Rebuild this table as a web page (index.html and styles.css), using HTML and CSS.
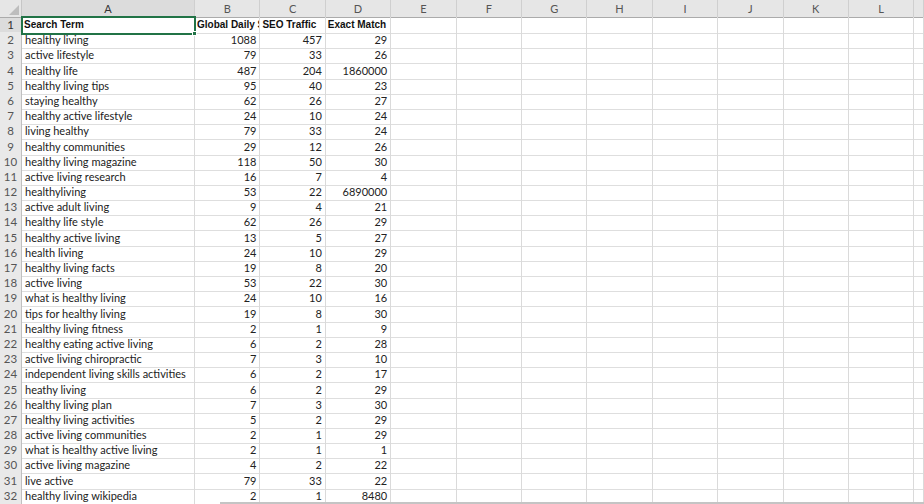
FILE: index.html
```html
<!DOCTYPE html>
<html>
<head>
<meta charset="utf-8">
<link rel="stylesheet" href="styles.css">
</head>
<body>
<div class="sheet">
  <div class="row hdr">
    <div class="corner"><span class="tri"></span></div>
    <div class="ch sel">A</div><div class="ch">B</div><div class="ch">C</div><div class="ch">D</div><div class="ch">E</div><div class="ch">F</div><div class="ch">G</div><div class="ch">H</div><div class="ch">I</div><div class="ch">J</div><div class="ch">K</div><div class="ch">L</div><div class="ch"></div>
  </div>
  <div class="row"><div class="rh sel">1</div><div class="c t b active">Search Term<span class="handle"></span></div><div class="c t b">Global Daily Search Volume</div><div class="c t b">SEO Traffic</div><div class="c t b">Exact Match</div><div class="c"></div><div class="c"></div><div class="c"></div><div class="c"></div><div class="c"></div><div class="c"></div><div class="c"></div><div class="c"></div><div class="c"></div></div>
  <div class="row"><div class="rh">2</div><div class="c t">healthy living</div><div class="c n">1088</div><div class="c n">457</div><div class="c n">29</div><div class="c"></div><div class="c"></div><div class="c"></div><div class="c"></div><div class="c"></div><div class="c"></div><div class="c"></div><div class="c"></div><div class="c"></div></div>
  <div class="row"><div class="rh">3</div><div class="c t">active lifestyle</div><div class="c n">79</div><div class="c n">33</div><div class="c n">26</div><div class="c"></div><div class="c"></div><div class="c"></div><div class="c"></div><div class="c"></div><div class="c"></div><div class="c"></div><div class="c"></div><div class="c"></div></div>
  <div class="row"><div class="rh">4</div><div class="c t">healthy life</div><div class="c n">487</div><div class="c n">204</div><div class="c n">1860000</div><div class="c"></div><div class="c"></div><div class="c"></div><div class="c"></div><div class="c"></div><div class="c"></div><div class="c"></div><div class="c"></div><div class="c"></div></div>
  <div class="row"><div class="rh">5</div><div class="c t">healthy living tips</div><div class="c n">95</div><div class="c n">40</div><div class="c n">23</div><div class="c"></div><div class="c"></div><div class="c"></div><div class="c"></div><div class="c"></div><div class="c"></div><div class="c"></div><div class="c"></div><div class="c"></div></div>
  <div class="row"><div class="rh">6</div><div class="c t">staying healthy</div><div class="c n">62</div><div class="c n">26</div><div class="c n">27</div><div class="c"></div><div class="c"></div><div class="c"></div><div class="c"></div><div class="c"></div><div class="c"></div><div class="c"></div><div class="c"></div><div class="c"></div></div>
  <div class="row"><div class="rh">7</div><div class="c t">healthy active lifestyle</div><div class="c n">24</div><div class="c n">10</div><div class="c n">24</div><div class="c"></div><div class="c"></div><div class="c"></div><div class="c"></div><div class="c"></div><div class="c"></div><div class="c"></div><div class="c"></div><div class="c"></div></div>
  <div class="row"><div class="rh">8</div><div class="c t">living healthy</div><div class="c n">79</div><div class="c n">33</div><div class="c n">24</div><div class="c"></div><div class="c"></div><div class="c"></div><div class="c"></div><div class="c"></div><div class="c"></div><div class="c"></div><div class="c"></div><div class="c"></div></div>
  <div class="row"><div class="rh">9</div><div class="c t">healthy communities</div><div class="c n">29</div><div class="c n">12</div><div class="c n">26</div><div class="c"></div><div class="c"></div><div class="c"></div><div class="c"></div><div class="c"></div><div class="c"></div><div class="c"></div><div class="c"></div><div class="c"></div></div>
  <div class="row"><div class="rh">10</div><div class="c t">healthy living magazine</div><div class="c n">118</div><div class="c n">50</div><div class="c n">30</div><div class="c"></div><div class="c"></div><div class="c"></div><div class="c"></div><div class="c"></div><div class="c"></div><div class="c"></div><div class="c"></div><div class="c"></div></div>
  <div class="row"><div class="rh">11</div><div class="c t">active living research</div><div class="c n">16</div><div class="c n">7</div><div class="c n">4</div><div class="c"></div><div class="c"></div><div class="c"></div><div class="c"></div><div class="c"></div><div class="c"></div><div class="c"></div><div class="c"></div><div class="c"></div></div>
  <div class="row"><div class="rh">12</div><div class="c t">healthyliving</div><div class="c n">53</div><div class="c n">22</div><div class="c n">6890000</div><div class="c"></div><div class="c"></div><div class="c"></div><div class="c"></div><div class="c"></div><div class="c"></div><div class="c"></div><div class="c"></div><div class="c"></div></div>
  <div class="row"><div class="rh">13</div><div class="c t">active adult living</div><div class="c n">9</div><div class="c n">4</div><div class="c n">21</div><div class="c"></div><div class="c"></div><div class="c"></div><div class="c"></div><div class="c"></div><div class="c"></div><div class="c"></div><div class="c"></div><div class="c"></div></div>
  <div class="row"><div class="rh">14</div><div class="c t">healthy life style</div><div class="c n">62</div><div class="c n">26</div><div class="c n">29</div><div class="c"></div><div class="c"></div><div class="c"></div><div class="c"></div><div class="c"></div><div class="c"></div><div class="c"></div><div class="c"></div><div class="c"></div></div>
  <div class="row"><div class="rh">15</div><div class="c t">healthy active living</div><div class="c n">13</div><div class="c n">5</div><div class="c n">27</div><div class="c"></div><div class="c"></div><div class="c"></div><div class="c"></div><div class="c"></div><div class="c"></div><div class="c"></div><div class="c"></div><div class="c"></div></div>
  <div class="row"><div class="rh">16</div><div class="c t">health living</div><div class="c n">24</div><div class="c n">10</div><div class="c n">29</div><div class="c"></div><div class="c"></div><div class="c"></div><div class="c"></div><div class="c"></div><div class="c"></div><div class="c"></div><div class="c"></div><div class="c"></div></div>
  <div class="row"><div class="rh">17</div><div class="c t">healthy living facts</div><div class="c n">19</div><div class="c n">8</div><div class="c n">20</div><div class="c"></div><div class="c"></div><div class="c"></div><div class="c"></div><div class="c"></div><div class="c"></div><div class="c"></div><div class="c"></div><div class="c"></div></div>
  <div class="row"><div class="rh">18</div><div class="c t">active living</div><div class="c n">53</div><div class="c n">22</div><div class="c n">30</div><div class="c"></div><div class="c"></div><div class="c"></div><div class="c"></div><div class="c"></div><div class="c"></div><div class="c"></div><div class="c"></div><div class="c"></div></div>
  <div class="row"><div class="rh">19</div><div class="c t">what is healthy living</div><div class="c n">24</div><div class="c n">10</div><div class="c n">16</div><div class="c"></div><div class="c"></div><div class="c"></div><div class="c"></div><div class="c"></div><div class="c"></div><div class="c"></div><div class="c"></div><div class="c"></div></div>
  <div class="row"><div class="rh">20</div><div class="c t">tips for healthy living</div><div class="c n">19</div><div class="c n">8</div><div class="c n">30</div><div class="c"></div><div class="c"></div><div class="c"></div><div class="c"></div><div class="c"></div><div class="c"></div><div class="c"></div><div class="c"></div><div class="c"></div></div>
  <div class="row"><div class="rh">21</div><div class="c t">healthy living fitness</div><div class="c n">2</div><div class="c n">1</div><div class="c n">9</div><div class="c"></div><div class="c"></div><div class="c"></div><div class="c"></div><div class="c"></div><div class="c"></div><div class="c"></div><div class="c"></div><div class="c"></div></div>
  <div class="row"><div class="rh">22</div><div class="c t">healthy eating active living</div><div class="c n">6</div><div class="c n">2</div><div class="c n">28</div><div class="c"></div><div class="c"></div><div class="c"></div><div class="c"></div><div class="c"></div><div class="c"></div><div class="c"></div><div class="c"></div><div class="c"></div></div>
  <div class="row"><div class="rh">23</div><div class="c t">active living chiropractic</div><div class="c n">7</div><div class="c n">3</div><div class="c n">10</div><div class="c"></div><div class="c"></div><div class="c"></div><div class="c"></div><div class="c"></div><div class="c"></div><div class="c"></div><div class="c"></div><div class="c"></div></div>
  <div class="row"><div class="rh">24</div><div class="c t">independent living skills activities</div><div class="c n">6</div><div class="c n">2</div><div class="c n">17</div><div class="c"></div><div class="c"></div><div class="c"></div><div class="c"></div><div class="c"></div><div class="c"></div><div class="c"></div><div class="c"></div><div class="c"></div></div>
  <div class="row"><div class="rh">25</div><div class="c t">heathy living</div><div class="c n">6</div><div class="c n">2</div><div class="c n">29</div><div class="c"></div><div class="c"></div><div class="c"></div><div class="c"></div><div class="c"></div><div class="c"></div><div class="c"></div><div class="c"></div><div class="c"></div></div>
  <div class="row"><div class="rh">26</div><div class="c t">healthy living plan</div><div class="c n">7</div><div class="c n">3</div><div class="c n">30</div><div class="c"></div><div class="c"></div><div class="c"></div><div class="c"></div><div class="c"></div><div class="c"></div><div class="c"></div><div class="c"></div><div class="c"></div></div>
  <div class="row"><div class="rh">27</div><div class="c t">healthy living activities</div><div class="c n">5</div><div class="c n">2</div><div class="c n">29</div><div class="c"></div><div class="c"></div><div class="c"></div><div class="c"></div><div class="c"></div><div class="c"></div><div class="c"></div><div class="c"></div><div class="c"></div></div>
  <div class="row"><div class="rh">28</div><div class="c t">active living communities</div><div class="c n">2</div><div class="c n">1</div><div class="c n">29</div><div class="c"></div><div class="c"></div><div class="c"></div><div class="c"></div><div class="c"></div><div class="c"></div><div class="c"></div><div class="c"></div><div class="c"></div></div>
  <div class="row"><div class="rh">29</div><div class="c t">what is healthy active living</div><div class="c n">2</div><div class="c n">1</div><div class="c n">1</div><div class="c"></div><div class="c"></div><div class="c"></div><div class="c"></div><div class="c"></div><div class="c"></div><div class="c"></div><div class="c"></div><div class="c"></div></div>
  <div class="row"><div class="rh">30</div><div class="c t">active living magazine</div><div class="c n">4</div><div class="c n">2</div><div class="c n">22</div><div class="c"></div><div class="c"></div><div class="c"></div><div class="c"></div><div class="c"></div><div class="c"></div><div class="c"></div><div class="c"></div><div class="c"></div></div>
  <div class="row"><div class="rh">31</div><div class="c t">live active</div><div class="c n">79</div><div class="c n">33</div><div class="c n">22</div><div class="c"></div><div class="c"></div><div class="c"></div><div class="c"></div><div class="c"></div><div class="c"></div><div class="c"></div><div class="c"></div><div class="c"></div></div>
  <div class="row"><div class="rh">32</div><div class="c t">healthy living wikipedia</div><div class="c n">2</div><div class="c n">1</div><div class="c n">8480</div><div class="c"></div><div class="c"></div><div class="c"></div><div class="c"></div><div class="c"></div><div class="c"></div><div class="c"></div><div class="c"></div><div class="c"></div></div>
  <div class="hscroll"></div>
</div>
</body>
</html>
```

FILE: styles.css
```css
* { box-sizing: border-box; }
html, body { margin: 0; padding: 0; background: #fff; }
body { width: 924px; height: 504px; overflow: hidden; }
.sheet {
  position: relative;
  width: 924px;
  height: 504px;
  overflow: hidden;
  font-family: Lato, "Liberation Sans", sans-serif;
  font-size: 11px;
  color: #222;
}
.row {
  display: grid;
  grid-template-columns: 22px 173px repeat(11, 65.4px) 1fr;
  height: 15.2px;
}
.row.hdr { height: 17px; }
.corner {
  position: relative;
  background: #e6e6e6;
  border-right: 1px solid #c6c6c6;
  border-bottom: 1px solid #ababab;
}
.tri {
  position: absolute;
  right: 2px;
  bottom: 2px;
  width: 0; height: 0;
  border-left: 10px solid transparent;
  border-bottom: 10px solid #bdbdbd;
}
.ch {
  background: #e6e6e6;
  border-right: 1px solid #cfcfcf;
  border-bottom: 1px solid #ababab;
  color: #555;
  text-align: center;
  line-height: 17px;
  font-size: 11px;
}
.ch.sel { background: #dcdcdc; border-bottom: 1px solid #217346; color: #333; }
.rh {
  background: #e9e9e9;
  border-right: 1px solid #c0c0c0;
  border-bottom: 1px solid #d6d6d6;
  color: #555;
  text-align: center;
  line-height: 16px;
  font-size: 11.5px;
}
.rh.sel { background: #dcdcdc; color: #333; }
.c {
  border-right: 1px solid #dadada;
  border-bottom: 1px solid #dedede;
  padding-top: 1px;
  line-height: 14px;
  white-space: nowrap;
  overflow: hidden;
}
.c.t { padding-left: 3px; }
.c.n { text-align: right; padding-right: 3px; }
.c.b {
  font-family: "Liberation Sans", Arial, sans-serif;
  font-weight: bold;
  font-size: 10px;
  color: #111;
  padding-left: 2px;
}
.c.active {
  position: relative;
  overflow: visible;
  outline: 2px solid #217346;
  outline-offset: -1px;
  z-index: 2;
}
.handle {
  position: absolute;
  right: -3px;
  bottom: -3px;
  width: 5px;
  height: 5px;
  background: #217346;
  border: 1px solid #fff;
}
.hscroll {
  position: absolute;
  left: 220px;
  right: 0;
  bottom: 0;
  height: 2px;
  background: #c4c4c4;
}
```
